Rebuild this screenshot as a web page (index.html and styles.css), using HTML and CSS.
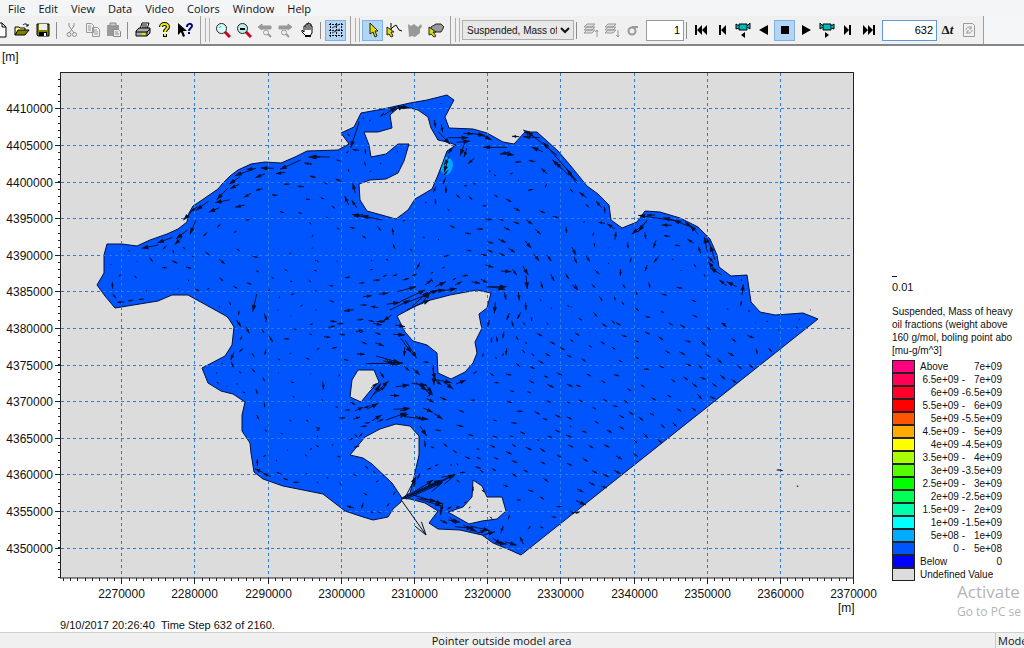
FILE: index.html
```html
<!DOCTYPE html>
<html lang="en">
<head>
    <meta charset="UTF-8">
    <title>Result Viewer</title>
    <link rel="stylesheet" href="styles.css">
</head>
<body>
<nav class="menu">
    <button>File</button>
    <button>Edit</button>
    <button>View</button>
    <button>Data</button>
    <button>Video</button>
    <button>Colors</button>
    <button>Window</button>
    <button>Help</button>
</nav>
<div class="toolbar">
    <div class="band first">
        <button class="tool" aria-label="New"><svg viewBox="0 0 16 16"><path d="M2 1h7l4 4v10H2z" fill="#fff" stroke="#000"/><path d="M9 1v4h4" fill="none" stroke="#000"/></svg></button>
        <button class="tool" aria-label="Open"><svg viewBox="0 0 16 16"><path d="M1 13V5h4l1 1h5v3" fill="#ffff80" stroke="#000"/><path d="M1 13l3-5h11l-4 5z" fill="#808000" stroke="#000"/><path d="M9 3c2-2 4-1 5 1m0-2v2h-2" fill="none" stroke="#000"/></svg></button>
        <button class="tool" aria-label="Save"><svg viewBox="0 0 16 16"><path d="M2 2h12v12H3l-1-1z" fill="#808000" stroke="#000"/><path d="M4 2h8v6H4z" fill="#eee"/><path d="M4 10h8v4H4z" fill="#000"/><path d="M9 11h2v3H9z" fill="#fff"/></svg></button>
        <span class="sep"></span>
        <button class="tool" aria-label="Cut"><svg viewBox="0 0 16 16" fill="none" stroke="#8c8c8c"><path d="M5 1v3l5 7M10 1v3l-5 7"/><circle cx="5" cy="12.500" r="2"/><circle cx="10.500" cy="12.500" r="2"/></svg></button>
        <button class="tool" aria-label="Copy"><svg viewBox="0 0 16 16" fill="#eee" stroke="#999"><path d="M1.500 1.500h5l2 2v7h-7zM7.500 5.500h5l2 2v7h-7z"/><path d="M3 4h3M3 6h3M3 8h3M9 8h3M9 10h4M9 12h4"/></svg></button>
        <button class="tool" aria-label="Paste"><svg viewBox="0 0 16 16"><path d="M1 3h12v11H1z" fill="#999"/><path d="M4 1h6v3H4z" fill="#ccc" stroke="#888"/><path d="M7.500 7.500h5l2 2v5h-7z" fill="#eee" stroke="#888"/><path d="M9 10h3M9 12h4" stroke="#888"/></svg></button>
        <span class="sep"></span>
        <button class="tool" aria-label="Print"><svg viewBox="0 0 16 16"><path d="M5 7l2-6h7l-2 6z" fill="#fff" stroke="#000"/><path d="M7 3h5M7 5h5" stroke="#000"/><path d="M1 9l3-3h11v5l-3 3H1z" fill="#aaa" stroke="#000"/><path d="M1 10h11l3-3M12 10v4" fill="none" stroke="#000"/><path d="M7 12h3" stroke="#dd0" stroke-width="2"/></svg></button>
        <button class="tool" aria-label="About"><svg viewBox="0 0 16 16" fill="none"><path d="M5 5c0-4 7-4 7 0 0 2-3 2-3 5M9 12v3" stroke="#000" stroke-width="4"/><path d="M5 5c0-4 7-4 7 0 0 2-3 2-3 5M9 12v2" stroke="#ee0" stroke-width="2"/></svg></button>
        <button class="tool" aria-label="Context help"><svg viewBox="0 0 16 16"><path d="M1 1v12l3-3 2 5 2-1-2-5h4z" fill="#000"/><path d="M10 5c0-4 5-4 5-1 0 2-3 2-3 5M12 10v2" fill="none" stroke="#000080" stroke-width="2"/></svg></button>
    </div>
    <div class="band">
        <span class="grip"></span>
        <button class="tool" aria-label="Zoom in"><svg viewBox="0 0 16 16"><path d="M10 10l5 5" stroke="#d00020" stroke-width="3"/><circle cx="6.500" cy="6.500" r="5" fill="#d8ffff" stroke="#222"/><path d="M4 6l2-2" stroke="#0cc"/></svg></button>
        <button class="tool" aria-label="Zoom out"><svg viewBox="0 0 16 16"><path d="M10 10l5 5" stroke="#d00020" stroke-width="3"/><circle cx="6.500" cy="6.500" r="5" fill="#b8f0f0" stroke="#222"/><path d="M4 7h5" stroke="#000" stroke-width="2"/></svg></button>
        <button class="tool" aria-label="Previous zoom"><svg viewBox="0 0 16 16" fill="none" stroke="#999"><path d="M1 5l4-3v2h9v3H5v1z" fill="#999"/><circle cx="9" cy="10.500" r="2.500" fill="#eee"/><path d="M11 12l3 3" stroke-width="2"/></svg></button>
        <button class="tool" aria-label="Next zoom"><svg viewBox="0 0 16 16" fill="none" stroke="#999"><path d="M14 5l-4-3v2H1v3h9v1z" fill="#999"/><circle cx="6" cy="10.500" r="2.500" fill="#eee"/><path d="M8 12l3 3" stroke-width="2"/></svg></button>
        <button class="tool" aria-label="Pan"><svg viewBox="0 0 16 16"><path d="M5 10V4h2V2h2V1h1v1h2v2h1v7l-2 3H7L3 10V8z" fill="#fff" stroke="#000"/><path d="M7 4v4M9 2v6M11 3v5" stroke="#000"/><path d="M6 14h6" stroke="#000" stroke-width="2"/></svg></button>
        <span class="sep"></span>
        <button class="tool on" aria-label="Grid"><svg viewBox="0 0 16 16" fill="none" stroke="#111"><path d="M1 2.500h14M1 8.500h14M1 13.500h14M2.500 1v14M8.500 1v14M13.500 1v14" stroke-dasharray="2 1"/><path d="M4 6l8-4M4 11l8-4" stroke="#336"/></svg></button>
    </div>
    <div class="band">
        <span class="grip"></span>
        <button class="tool on" aria-label="Select"><svg viewBox="0 0 16 16"><path d="M5 1v11l3-2 2 5 2-1-2-5h3z" fill="#dd0" stroke="#222"/></svg></button>
        <button class="tool" aria-label="Profile"><svg viewBox="0 0 16 16"><path d="M5 1v12M3 9l4-4 3-2 3 5 3 1" fill="none" stroke="#000"/><path d="M1 5v8l2-1 2 3 2-1-2-4h3z" fill="#dd0" stroke="#222"/></svg></button>
        <button class="tool" aria-label="Area"><svg viewBox="0 0 16 16"><path d="M1 2l3 2 3-2 4 3 3-3 1 3-2 2v4l-5 4-3-1-3 1z" fill="#999"/></svg></button>
        <button class="tool" aria-label="Polygon"><svg viewBox="0 0 16 16"><path d="M3 5l5-3h5l3 3-3 5H6L3 8z" fill="#999" stroke="#222"/><path d="M1 5v8l2-1 3 3 2-1-3-4h3z" fill="#dd0" stroke="#222"/></svg></button>
    </div>
    <div class="band">
        <span class="grip"></span>
        <select class="item" aria-label="Item"><option>Suspended, Mass of</option></select>
        <span class="sep narrow"></span>
        <button class="tool" aria-label="Layer up"><svg viewBox="0 0 16 16" fill="#ddd" stroke="#999"><path d="M1 11l3-3h8l-3 3zM1 8l3-3h8L9 8zM1 5l3-3h8L9 5z"/><path d="M14 15V8m-2 2l2-2 1 2" fill="none"/></svg></button>
        <button class="tool" aria-label="Layer down"><svg viewBox="0 0 16 16" fill="#ddd" stroke="#999"><path d="M1 11l3-3h8l-3 3zM1 8l3-3h8L9 8zM1 5l3-3h8L9 5z"/><path d="M14 8v7m-2-2l2 2 1-2" fill="none"/></svg></button>
        <button class="tool" aria-label="Sigma layer"><svg viewBox="0 0 16 16" fill="none" stroke="#999" stroke-width="2"><circle cx="7" cy="9" r="3.500"/><path d="M7 5h6"/></svg></button>
        <input class="num layer" type="text" value="1" aria-label="Layer">
        <span class="sep narrow"></span>
        <button class="tool" aria-label="First"><svg viewBox="0 0 16 16"><path d="M2 3h2v10H2zM4 8l5-5v10zM9 8l5-5v10z"/></svg></button>
        <button class="tool" aria-label="Step back"><svg viewBox="0 0 16 16"><path d="M5 3h2v10H5zM7 8l5-5v10z"/></svg></button>
        <button class="tool" aria-label="Record back"><svg viewBox="0 0 16 16"><path d="M4 2h8v6H4z" fill="#0bb" stroke="#000"/><path d="M4 4L1 2v5l3-1M12 4l3-3v6l-3-2" fill="#0bb" stroke="#000"/><path d="M6 13l4-3v6z"/></svg></button>
        <button class="tool" aria-label="Play back"><svg viewBox="0 0 16 16"><path d="M3 8l9-5v10z"/></svg></button>
        <button class="tool on" aria-label="Stop"><svg viewBox="0 0 16 16"><path d="M4 4h8v8H4z"/></svg></button>
        <button class="tool" aria-label="Play"><svg viewBox="0 0 16 16"><path d="M13 8L4 3v10z"/></svg></button>
        <button class="tool" aria-label="Record"><svg viewBox="0 0 16 16"><path d="M4 2h8v6H4z" fill="#0bb" stroke="#000"/><path d="M12 4l3-2v5l-3-1M4 4L1 1v6l3-2" fill="#0bb" stroke="#000"/><path d="M10 13l-4-3v6z"/></svg></button>
        <button class="tool" aria-label="Step forward"><svg viewBox="0 0 16 16"><path d="M9 3h2v10H9zM9 8L4 3v10z"/></svg></button>
        <button class="tool" aria-label="Last"><svg viewBox="0 0 16 16"><path d="M12 3h2v10h-2zM12 8L7 3v10zM7 8L2 3v10z"/></svg></button>
        <input class="num step" type="text" value="632" aria-label="Time step">
        <button class="tool delta" aria-label="Time increment">&Delta;<i>t</i></button>
        <button class="tool" aria-label="Refresh"><svg viewBox="0 0 16 16" fill="none" stroke="#999"><path d="M2.500 1.500h9l2 2v11h-11z"/><path d="M5 8c0-3 4-4 5-2m0-2v3H8M11 8c0 3-4 4-5 2m0 2V9h2"/></svg></button>
    </div>
</div>
<main class="view">
    <div class="plot">
        <svg class="map" viewBox="0 46 880 570">
            <rect x="61" y="73" width="793" height="505" fill="#dcdcdc"/>
            <g class="water">
                <path d="M107 244L122 244 137 246 150 240 167 234 178 229 187 222 189 213 193 206 202 200 218 189 223 183 230 176 238 170 251 164 265 162 281 163 295 157 307 151 338 150 349 144 341 133 354 127 361 113 383 109 410 103 427 100 447 95 454 100 445 117 449 128 473 129 487 133 503 142 514 144 525 132 537 132 558 151 570 165 587 186 598 194 609 205 611 220 622 228 637 222 645 211 660 212 680 218 698 227 710 239 717 255 719 267 731 276 747 275 751 302 760 312 775 315 803 313 818 319 521 555 510 550 493 543 482 535 460 530 438 529 429 523 438 511 425 503 410 499 402 498 401 502 393 509 388 517 373 520 363 517 345 511 323 494 283 486 263 479 254 472 251 453 250 443 242 431 242 415 245 402 233 394 221 391 208 383 202 368 225 356 232 345 234 327 229 319 226 316 188 295 172 295 158 301 115 308 105 296 97 285 104 273 104 255z"/>
            </g>
            <path d="M446 157q6 0 7 8-1 8-7 10-5-2-7-9 2-8 7-9z" fill="#00aaff"/>
            <g class="land">
                <path d="M390 115L398 108 410 108 418 110 428 117 431 128 438 140 447 142 456 145 447 151 443 162 438 175 432 189 415 199 408 210 396 219 367 211 360 200 359 184 370 180 386 179 398 173 404 161 409 144 398 144 386 154 371 157 369 145 364 132 378 132 392 128z"/>
                <path d="M397 316L423 302 450 295 477 290 491 293 487 308 479 314 481 325 482 328 475 342 477 353 473 363 465 372 451 379 438 373 437 353 427 345 413 341 405 332z"/>
                <path d="M358 370L374 370 379 382 370 391 361 402 350 397 352 380z"/>
                <path d="M350 455L365 437 380 429 396 424 410 426 419 436 419 455 414 477 410 493 402 498 392 483 372 464 363 458z"/>
                <path d="M473 480L482 486 487 497 502 497 506 511 497 519 482 521 469 524 448 512 463 507 472 497z"/>
            </g>
            <path id="grid" class="grid"/>
            <path id="flow" class="flow"/>
            <path id="heads" class="heads"/>
            <path id="ticks" class="ticks"/>
            <rect x="60.500" y="72.500" width="793" height="505.500" class="frame"/>
            <g id="labels" class="axis">
                <text x="2" y="61">[m]</text>
                <text x="838" y="612">[m]</text>
            </g>
        </svg>
        <p class="stamp">9/10/2017 20:26:40 &nbsp;Time Step 632 of 2160.</p>
    </div>
    <aside class="legend">
        <div class="scale">0.01</div>
        <h1 class="title">Suspended, Mass of heavy<br>oil fractions (weight above<br>160 g/mol, boling point abo<br>[mu-g/m^3]</h1>
        <table class="ranges">
            <tr><td class="c1"></td><th>Above</th><td>7e+09</td></tr>
            <tr><td class="c2"></td><td>6.5e+09 -</td><td>7e+09</td></tr>
            <tr><td class="c3"></td><td>6e+09 -</td><td>6.5e+09</td></tr>
            <tr><td class="c4"></td><td>5.5e+09 -</td><td>6e+09</td></tr>
            <tr><td class="c5"></td><td>5e+09 -</td><td>5.5e+09</td></tr>
            <tr><td class="c6"></td><td>4.5e+09 -</td><td>5e+09</td></tr>
            <tr><td class="c7"></td><td>4e+09 -</td><td>4.5e+09</td></tr>
            <tr><td class="c8"></td><td>3.5e+09 -</td><td>4e+09</td></tr>
            <tr><td class="c9"></td><td>3e+09 -</td><td>3.5e+09</td></tr>
            <tr><td class="c10"></td><td>2.5e+09 -</td><td>3e+09</td></tr>
            <tr><td class="c11"></td><td>2e+09 -</td><td>2.5e+09</td></tr>
            <tr><td class="c12"></td><td>1.5e+09 -</td><td>2e+09</td></tr>
            <tr><td class="c13"></td><td>1e+09 -</td><td>1.5e+09</td></tr>
            <tr><td class="c14"></td><td>5e+08 -</td><td>1e+09</td></tr>
            <tr><td class="c15"></td><td>0 -</td><td>5e+08</td></tr>
            <tr><td class="c16"></td><th>Below</th><td>0</td></tr>
            <tr><td class="c17"></td><th colspan="2">Undefined Value</th></tr>
        </table>
        <div class="activate">
            <p class="big">Activate</p>
            <p>Go to PC se</p>
        </div>
    </aside>
</main>
<footer class="status">
    <span class="pointer">Pointer outside model area</span>
    <span class="mode">Mode</span>
</footer>
<script src="plot.js"></script>
</body>
</html>
```

FILE: plot.js
```js
// grid, ticks and labels
var grid = '', ticks = '', i, p;
var labels = document.getElementById('labels');

function label(x, y, text, anchor) {
    var t = document.createElementNS('http://www.w3.org/2000/svg', 'text');
    t.setAttribute('x', x);
    t.setAttribute('y', y);
    t.setAttribute('text-anchor', anchor);
    t.textContent = text;
    labels.appendChild(t);
}

for (i = 0; i <= 10; i++) {
    p = Math.floor(121.7 + i * 73.2) + 0.5;
    if (i < 10) grid += 'M' + p + ' 73V578';
    ticks += 'M' + p + ' 578v6';
    label(p, 598, 2270000 + i * 10000, 'middle');
}
for (i = 0; i <= 12; i++) {
    p = Math.floor(108.9 + i * 36.6) + 0.5;
    grid += 'M61 ' + p + 'H853';
    ticks += 'M61 ' + p + 'h-6';
    label(53, p + 4, 4410000 - i * 5000, 'end');
}
for (i = 0; i <= 108; i++) {
    ticks += 'M' + (Math.floor(63.2 + i * 7.32) + 0.5) + ' 578v3';
}
for (i = 0; i <= 68; i++) {
    ticks += 'M61 ' + (Math.floor(79.4 + i * 7.32) + 0.5) + 'h-3';
}
document.getElementById('grid').setAttribute('d', grid);
document.getElementById('ticks').setAttribute('d', ticks);

// current vectors: tail x, tail y, head x, head y in thirds of a unit from the tile corner
var tiles = [
    {x: 50, y: 65, v: '752 285 690 313,810 276 775 276,785 298 763 294,705 322 678 326,618 311 590 313,672 310 632 309,610 313 555 332,645 326 616 338,797 337 780 333,570 335 537 358,720 357 702 358,762 365 743 364,567 358 540 371,535 368 500 404,638 371 618 376,603 385 582 397,684 391 666 390,780 404 768 402,476 408 438 436,540 404 495 413,584 420 556 427,508 428 476 442,443 425 422 440,425 440 400 466,702 443 690 440,756 445 745 443,438 465 420 508,412 495 378 522,368 517 322 534,396 517 374 539,512 477 502 487,472 502 460 514,600 462 588 466,784 478 778 472,560 498 552 503,350 542 338 553,325 540 275 550,398 545 406 553,372 565 368 555,235 557 239 559,426 574 431 575,466 560 478 570,560 552 569 557,608 574 623 577,718 566 724 564,785 550 788 549,790 512 787 510,298 577 308 590,262 590 260 588,366 587 382 595,336 608 350 608,408 606 423 610,508 583 525 597,618 617 626 621,704 613 712 618,800 585 805 591,183 600 182 598,214 628 206 634,253 633 260 638,188 672 187 652,508 638 520 648,664 635 672 641,720 648 727 650,776 645 783 652,550 664 562 670,590 653 604 658,287 677 292 679,383 672 385 670,416 648 415 644,436 672 448 678,478 670 472 673,660 673 654 677,188 686 198 700,222 711 202 712,250 705 235 708,282 702 266 704,686 698 690 695,733 686 722 689,800 677 794 678,620 687 608 740,538 710 542 720,758 720 752 724,643 746 650 766,568 737 565 750,686 734 683 736,506 724 510 727,800 734 796 736,724 752 722 754,560 767 567 777'},
    {x: 310, y: 65, v: '60 276 0 275,5 298 0 296,15 337 0 334,148 170 122 248,222 150 260 125,240 137 285 124,262 124 298 128,120 214 112 206,158 160 162 160,210 155 222 145,182 165 178 168,395 117 392 114,373 165 377 188,394 178 398 202,385 200 420 238,415 218 475 218,440 232 480 228,460 205 490 207,485 205 525 212,505 205 545 225,592 247 520 247,575 265 612 270,600 260 570 268,628 215 606 214,670 213 640 195,690 218 640 215,740 270 650 198,800 347 700 232,800 355 770 312,755 312 727 284,775 330 735 290,698 260 665 246,148 256 128 254,165 252 167 268,116 258 108 264,164 290 166 302,92 288 80 285,260 262 263 258,210 295 214 296,115 312 116 320,180 320 184 318,470 250 462 277,493 280 474 296,465 232 450 272,430 245 415 265,418 275 402 300,412 290 402 322,415 315 402 330,407 338 399 357,378 365 370 382,408 362 408 384,376 402 377 418,350 412 345 412,412 432 418 437,634 290 616 292,676 290 656 286,608 323 600 328,712 327 694 310,536 318 542 319,552 330 558 332,490 357 498 356,624 348 627 345,710 357 706 367,472 362 462 362,439 388 450 400,475 393 487 404,553 390 563 396,530 422 518 423,670 373 655 376,95 350 77 342,53 358 43 353,136 385 128 355,116 420 104 393,140 428 125 406,32 398 42 402,65 422 74 430,216 465 155 452,180 460 126 448,160 448 132 454,278 468 286 466,316 467 317 467,48 456 53 458,80 488 88 493,120 487 134 490,202 484 213 497,156 512 168 520,250 510 247 490,256 552 249 538,300 552 307 558,5 516 8 514,338 516 344 518,384 523 387 524,420 482 434 488,465 504 482 506,500 492 519 492,527 462 546 464,568 463 580 466,588 402 604 410,612 429 630 438,610 470 628 477,582 487 600 496,648 464 668 478,565 522 588 533,532 530 550 535,676 493 692 508,728 454 746 458,688 437 705 444,595 550 615 562,645 527 664 550,670 566 688 588,768 486 770 504,568 565 584 572,532 554 548 562,513 568 530 571,470 556 484 557,402 575 416 570,156 560 155 562,182 585 186 588,228 583 235 586,330 592 320 612,362 625 369 622,396 610 404 607,362 640 368 650,526 600 550 607,572 618 604 620,607 612 620 630,638 603 655 630,710 569 724 588,785 546 798 570,722 628 733 648,766 625 776 642,105 638 120 636,148 655 163 653,180 615 188 613,190 646 210 645,218 635 230 630,248 633 262 629,278 645 297 640,306 632 320 627,12 616 20 618,15 588 18 586,80 590 82 587,58 662 70 663,512 642 532 653,485 650 510 655,456 633 474 631,428 645 438 640,530 666 590 665,535 664 585 673,648 632 652 672,692 650 698 670,795 658 803 675,583 682 588 704,625 680 628 706,556 712 553 745,647 712 648 735,690 703 694 708,598 744 590 765,632 742 622 762,664 756 665 768,722 728 726 731,772 720 778 726,245 750 220 768,160 695 185 692,206 688 235 684,262 680 318 665,270 710 345 675,285 715 385 675,305 725 355 680,335 718 360 680,360 680 405 675,400 678 440 670,435 660 455 650,375 665 408 650,345 660 365 645,230 718 270 712,240 735 300 705,290 735 360 705,205 728 182 724,152 720 170 720,132 734 102 738,58 706 72 712,140 765 160 763,175 766 192 770,200 770 220 768,80 770 60 768'},
    {x: 570, y: 65, v: '15 345 0 330,10 382 0 372,50 398 28 382,58 428 48 418,95 428 78 408,105 445 103 425,40 472 45 470,105 475 85 472,135 492 112 476,135 524 138 500,72 503 68 512,74 545 73 534,173 532 174 550,116 550 118 548,118 596 114 594,225 502 227 522,232 465 205 500,230 470 185 508,258 526 250 550,305 481 275 480,300 514 282 512,330 542 315 541,372 535 352 522,335 470 205 451,255 450 230 450,320 468 280 458,360 485 310 465,385 508 360 480,365 490 345 470,412 560 403 515,420 540 410 520,435 585 420 540,392 565 385 545,432 595 415 575,435 615 415 590,455 630 420 608,310 585 306 582,378 607 372 598,335 618 332 615,402 628 406 635,265 575 252 592,232 600 225 618,184 578 180 592,152 612 151 632,48 572 60 590,12 575 20 595,75 615 88 628,158 658 165 668,236 652 240 668,198 680 202 690,320 667 337 670,275 687 290 690,405 673 410 678,365 705 378 710,65 657 75 668,8 660 20 674,88 694 97 708,133 695 136 706,155 710 162 720,195 727 206 738,226 755 240 757,368 750 382 757,272 740 282 742,70 742 82 755,2 725 5 727,125 766 134 776,26 760 36 766,516 690 520 658,512 724 514 708,500 665 470 650,470 662 448 645,515 648 514 642,470 732 475 733,534 736 540 740,686 764 690 762,590 768 592 770,720 734 722 735,455 774 467 777'},
    {x: 50, y: 320, v: '560 0 573 20,588 20 598 40,570 60 575 50,635 28 642 38,658 48 668 66,702 56 718 57,732 28 740 27,778 42 786 44,800 88 808 85,580 85 568 95,552 95 542 120,544 125 550 142,612 110 606 100,648 88 644 104,720 102 723 98,684 116 690 120,768 114 778 118,514 132 518 130,498 160 502 158,573 160 568 154,605 145 615 157,684 160 686 158,722 186 732 188,506 190 500 187,562 194 560 190,638 172 644 184,618 208 622 222,578 216 586 218,530 198 532 200,728 228 733 232,643 248 644 262,776 254 780 256,620 285 626 298,718 300 724 304,768 300 775 304,645 328 650 335,692 340 698 342,800 330 808 330,798 376 806 380,712 390 714 392,766 403 770 409,648 405 640 410,680 420 679 424,622 438 622 418,640 458 615 446,662 470 640 460,694 462 680 457,714 480 700 475,748 487 730 487,768 460 772 462,800 486 805 488,645 2 650 5'},
    {x: 310, y: 320, v: '0 14 8 11,55 22 75 18,80 12 100 10,138 35 158 30,190 10 215 15,205 5 225 5,42 50 60 52,88 42 105 45,55 72 52 70,65 85 80 82,102 118 115 122,150 38 160 34,196 38 212 43,155 65 170 72,196 68 222 78,250 43 285 45,255 15 285 20,272 55 305 100,285 60 320 115,284 82 283 108,140 102 165 103,168 131 280 129,198 108 270 128,225 115 250 137,220 122 260 135,340 126 356 127,308 145 330 165,282 138 298 152,210 155 222 175,38 185 41 208,0 163 3 160,85 168 90 164,106 140 108 138,180 238 210 195,190 225 236 183,200 212 212 190,205 215 225 200,182 205 200 190,258 200 298 195,240 226 268 227,305 190 350 196,318 188 352 212,345 192 367 220,348 212 368 225,370 135 372 195,368 145 375 180,370 178 425 188,375 180 395 195,400 185 430 207,438 192 468 180,350 236 372 247,352 230 362 222,390 232 410 240,482 241 495 240,250 268 300 265,270 272 295 268,340 264 368 277,372 280 398 298,228 300 290 278,270 292 295 282,285 290 355 298,315 287 340 300,330 318 350 348,135 272 160 262,170 268 205 250,182 256 162 264,130 297 150 291,165 310 180 307,88 294 105 293,105 270 120 270,186 302 215 285,202 305 220 298,120 245 136 254,152 320 170 318,133 342 142 352,146 352 157 340,118 360 128 355,132 382 148 378,344 362 346 382,362 380 372 384,400 370 412 380,376 330 392 332,440 315 460 320,428 390 440 398,475 343 490 348,446 270 462 277,82 408 92 412,65 376 70 374,20 350 24 348,18 323 30 325,0 388 6 386,35 238 38 242,76 260 84 262,500 386 508 388,550 300 560 303,604 308 620 310,548 348 562 352,600 348 610 350,630 335 645 342,552 412 564 418,605 422 622 428,588 394 605 403,648 382 665 390,690 385 706 396,692 425 706 432,770 430 786 436,740 405 754 412,775 375 790 382,540 376 555 382,606 373 618 380,680 358 688 362,712 348 726 352,735 330 750 337,768 345 785 352,674 275 690 283,698 295 712 300,620 274 638 274,710 242 722 247,590 244 606 248,600 212 612 215,652 215 662 218,658 182 672 190,712 193 732 203,770 192 788 200,770 245 780 250,540 160 552 168,553 188 566 188,588 162 604 165,618 130 630 140,660 140 674 146,702 168 714 172,685 122 700 130,740 158 756 166,770 105 785 112,750 82 764 90,720 65 735 73,680 40 697 48,646 66 650 72,618 48 625 60,605 2 610 20,582 35 578 55,545 52 544 68,538 0 533 20,560 50 562 66,590 85 588 105,520 100 518 110,490 160 500 155,580 100 578 108,555 110 560 116,640 8 645 15,710 8 715 14,665 100 672 108,636 90 645 98,705 100 720 108,780 58 790 65,770 290 786 298,735 285 752 292,465 410 480 416,500 412 512 417,545 445 558 453,605 460 620 470,640 450 655 457,580 495 595 500,700 475 715 485,655 510 670 515,620 540 632 540,690 530 702 538,740 560 755 560,790 578 808 578,725 590 738 592,510 450 520 458,495 440 512 445,450 458 466 457,375 437 385 434,420 436 426 434,440 430 444 436,330 460 322 478,352 448 364 444,315 480 312 500,55 475 50 473,88 488 95 495,162 520 172 525,130 462 140 468,165 438 175 447,190 452 196 460,198 486 205 482,218 465 222 468,132 564 110 558,160 548 155 565,182 575 190 578,212 578 205 576,230 560 238 550,250 525 256 515,284 535 318 470,275 538 435 463,280 535 398 485,290 528 392 480,305 520 370 480,310 525 398 552,320 535 395 558,332 535 380 545,392 560 392 585,398 550 395 572,410 568 425 560,438 562 448 560,462 548 470 546,418 590 438 612,415 600 450 607,390 600 412 610,435 620 490 625,460 615 500 635,480 618 540 632,500 640 530 630,520 645 555 635,548 655 575 672,555 668 590 672,585 665 620 676,572 640 580 618,595 598 598 586,654 628 662 618,640 672 630 650,690 620 700 624,540 590 546 596,480 560 478 565,515 510 524 516,490 500 488 515,440 480 448 486'},
    {x: 570, y: 320, v: '15 38 28 47,95 10 110 20,138 8 152 16,155 46 170 50,225 36 240 43,296 8 308 16,330 14 346 23,265 50 280 60,196 62 206 66,92 65 104 72,56 76 66 82,126 82 136 88,35 116 48 125,146 120 156 126,196 110 206 116,286 92 300 100,328 95 346 105,346 62 362 66,392 62 408 78,410 20 422 30,454 10 470 20,484 54 498 66,532 46 552 54,474 98 492 108,440 115 456 130,406 102 422 112,385 134 396 146,348 132 364 137,268 138 282 143,222 147 236 148,132 164 148 168,50 162 62 168,94 182 106 188,18 195 32 200,172 206 184 212,212 194 224 202,304 178 316 186,340 170 354 180,390 172 408 178,366 190 382 202,426 190 440 200,450 165 466 178,484 178 500 190,502 135 515 147,536 132 550 145,558 86 562 102,595 85 606 95,26 240 38 245,100 238 112 244,128 257 144 260,162 240 174 250,244 233 258 241,292 226 304 231,382 222 396 238,420 230 436 236,68 262 78 268,148 286 162 293,176 275 190 284,206 290 220 302,240 280 252 286,320 266 334 274,365 264 378 272,36 334 50 337,74 304 86 310,110 330 126 338,148 320 162 328,220 340 234 354,272 312 284 324,308 308 320 320,56 376 70 384,102 374 118 382,138 408 156 418,192 360 202 370,190 400 204 410,262 358 276 368,38 415 54 425,66 452 82 460,98 462 116 470,132 450 152 462,22 507 40 516,56 486 74 496,18 542 48 555,0 572 12 582,94 498 110 504,0 318 4 320,556 8 558 9,590 2 593 5,624 28 628 32,678 20 683 24,620 450 630 450,630 450 638 452,680 498 685 499'}
];

var flow = '', heads = '';
tiles.forEach(function (tile) {
    tile.v.split(',').forEach(function (item) {
        var n = item.split(' ');
        var x1 = tile.x + n[0] / 3, y1 = tile.y + n[1] / 3;
        var x2 = tile.x + n[2] / 3, y2 = tile.y + n[3] / 3;
        arrow(x1, y1, x2, y2, false);
    });
});
arrow(402, 501, 426, 535, true);
arrow(410, 496, 455, 475, true);
arrow(406, 499, 442, 483, true);

function arrow(x1, y1, x2, y2, open) {
    var a = Math.atan2(y2 - y1, x2 - x1);
    var len = Math.sqrt((x2 - x1) * (x2 - x1) + (y2 - y1) * (y2 - y1));
    var h = open ? 14 : Math.min(len * 0.6, 7);
    var w = open ? 0.28 : 0.33;
    var d = 'M' + (x2 - h * Math.cos(a - w)).toFixed(1) + ' ' + (y2 - h * Math.sin(a - w)).toFixed(1) +
        'L' + x2.toFixed(1) + ' ' + y2.toFixed(1) +
        'L' + (x2 - h * Math.cos(a + w)).toFixed(1) + ' ' + (y2 - h * Math.sin(a + w)).toFixed(1);
    flow += 'M' + x1.toFixed(1) + ' ' + y1.toFixed(1) + 'L' + x2.toFixed(1) + ' ' + y2.toFixed(1);
    if (open) {
        flow += d;
    } else {
        heads += d + 'z';
    }
}
document.getElementById('flow').setAttribute('d', flow);
document.getElementById('heads').setAttribute('d', heads);
```

FILE: styles.css
```css
*{
    box-sizing: border-box;
    margin: 0;
    padding: 0;
}
body{
    display: flex;
    flex-direction: column;
    height: 100vh;
    overflow: hidden;
    background: #fff;
    color: #111;
    font: 11px "Liberation Sans", Arial, sans-serif;
}
button{
    border: 0;
    background: none;
    font: inherit;
    color: inherit;
}
.menu{
    display: flex;
    gap: 13px;
    flex: none;
    height: 16px;
    padding-left: 8px;
    background: #f4f5f7;
    font: 11px/15px "Open Sans", "Noto Sans", sans-serif;
}
.toolbar{
    display: flex;
    flex: none;
    height: 30px;
    background: #f5f6f8;
    border-bottom: 2px solid #868686;
    overflow: hidden;
}
.band{
    display: flex;
    flex: none;
    align-items: center;
    padding-right: 4px;
    background: #f0f0f0;
    border-right: 1px solid #a0a0a0;
}
.first{
    margin-left: -10px;
    padding-right: 5px;
}
.grip{
    width: 5px;
    height: 24px;
    margin: 0 2px 0 4px;
    border: 1px solid #b0b0b0;
    border-width: 0 1px;
}
.sep{
    width: 1px;
    height: 17px;
    margin: 0 4px 0 3px;
    background: #8c8c8c;
}
.narrow{
    margin: 0 3px 0 2px;
}
.tool{
    display: flex;
    align-items: center;
    justify-content: center;
    width: 21px;
    height: 21px;
}
.tool svg{
    flex: none;
    width: 16px;
    height: 16px;
}
.on{
    background: #b3d5f5;
    border: 1px solid #7eb0e4;
}
.item{
    width: 112px;
    height: 20px;
    padding-left: 0;
    border: 1px solid #adadad;
    background: #e8e8e8;
    color: #111;
    font: 10px "Liberation Sans", Arial, sans-serif;
}
.num{
    height: 21px;
    padding-right: 3px;
    border: 1px solid #999;
    background: #fff;
    font: 11px "Liberation Sans", Arial, sans-serif;
    text-align: right;
}
.layer{
    width: 38px;
    margin-left: 3px;
}
.step{
    width: 55px;
    margin-left: 3px;
    border-color: #5a9be0;
}
.delta{
    font: bold 13px "Liberation Serif", serif;
}
.view{
    display: flex;
    flex: 1;
    min-height: 0;
}
.plot{
    flex: 1;
    min-width: 0;
}
.map{
    display: block;
    width: 100%;
}
.water{
    fill: #0055ff;
    stroke: #001040;
}
.land{
    fill: #dcdcdc;
    stroke: #001040;
}
.grid{
    fill: none;
    stroke: #2f7cd8;
    stroke-dasharray: 3 3;
}
.flow{
    fill: none;
    stroke: #001030;
}
.heads{
    fill: #001030;
}
.ticks,
.frame{
    fill: none;
    stroke: #222;
}
.axis{
    font-size: 12px;
    fill: #111;
}
.stamp{
    padding-left: 60px;
    font-size: 11px;
    line-height: 19px;
}
.legend{
    display: flex;
    flex-direction: column;
    justify-content: flex-end;
    flex: none;
    width: 144px;
    padding: 0 0 10px 12px;
    overflow: hidden;
    white-space: nowrap;
}
.scale{
    margin-bottom: 11px;
    font-size: 11px;
    line-height: 14px;
}
.scale::before{
    content: "";
    display: block;
    width: 5px;
    height: 1px;
    margin-bottom: 3px;
    background: #111;
}
.title{
    margin-bottom: 3px;
    font-size: 10px;
    font-weight: normal;
    line-height: 13px;
}
.ranges{
    width: 110px;
    border-spacing: 0;
    table-layout: fixed;
    font-size: 10px;
    line-height: 11px;
}
.ranges tr{
    height: 13px;
}
.ranges td,
.ranges th{
    font-weight: normal;
    text-align: right;
}
.ranges th{
    padding-left: 5px;
    text-align: left;
}
.ranges td:first-child{
    width: 23px;
    border: 1px solid #222;
}
.ranges td:last-child{
    width: 37px;
}
.c1{ background: #ff0080; }
.c2{ background: #ff0055; }
.c3{ background: #ff002b; }
.c4{ background: #ff0000; }
.c5{ background: #ff5500; }
.c6{ background: #ffaa00; }
.c7{ background: #ffff00; }
.c8{ background: #aaff00; }
.c9{ background: #55ff00; }
.c10{ background: #00ff00; }
.c11{ background: #00ff55; }
.c12{ background: #00ffaa; }
.c13{ background: #00ffff; }
.c14{ background: #00aaff; }
.c15{ background: #0055ff; }
.c16{ background: #0000ff; }
.c17{ background: #dcdcdc; }
.activate{
    padding-left: 65px;
    color: #b4b4b4;
    font: 12px/20px "Open Sans", "Noto Sans", sans-serif;
}
.big{
    font-size: 17px;
    line-height: 21px;
}
.status{
    display: flex;
    flex: none;
    height: 16px;
    border-top: 1px solid #d0d0d0;
    background: #f0f0f0;
    font: 11px/15px "Open Sans", "Noto Sans", sans-serif;
}
.pointer{
    flex: 1;
    padding-left: 8px;
    text-align: center;
}
.mode{
    width: 29px;
    padding-left: 2px;
    border-left: 1px solid #c8c8c8;
}
```
